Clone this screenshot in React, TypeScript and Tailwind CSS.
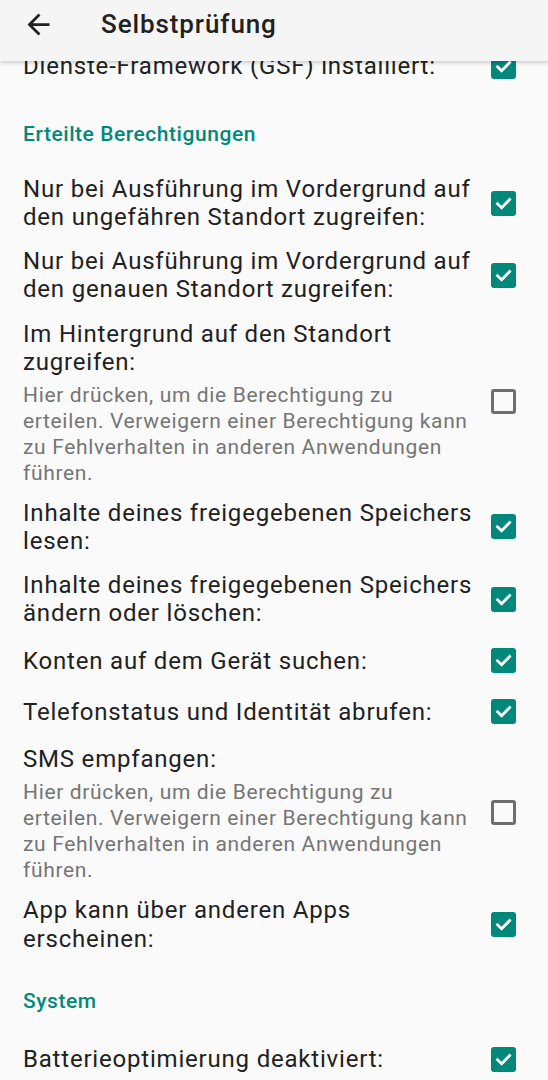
import React from "react";

type Item = { title: React.ReactNode; sub?: string; checked: boolean; first?: boolean };

const SUB =
  "Hier drücken, um die Berechtigung zu erteilen. Verweigern einer Berechtigung kann zu Fehlverhalten in anderen Anwendungen führen.";

function Check({ checked }: { checked: boolean }) {
  if (checked) {
    return (
      <div className="w-[25px] h-[25px] shrink-0 rounded-[3px] bg-[#00897b] flex items-center justify-center">
        <svg width="25" height="25" viewBox="0 0 25 25">
          <path d="M6.5 12.8 L10.6 16.8 L18.6 8.6" fill="none" stroke="#ffffff" strokeWidth="2.8" strokeLinecap="square" />
        </svg>
      </div>
    );
  }
  return <div className="w-[25px] h-[25px] shrink-0 rounded-[3px] border-[3px] border-[#6e6e6e]" />;
}

function Row({ item }: { item: Item }) {
  return (
    <div
      className={
        "flex items-center pl-[23px] pr-[32px] py-[8px] min-h-[51px] " + (item.first ? "mt-[-20px]" : "")
      }
    >
      <div className="flex-1 min-w-0 pr-[15px]">
        <div className="text-[24px] leading-[28.125px] tracking-[0.8px] text-[#212121]">{item.title}</div>
        {item.sub && (
          <div className="text-[21px] leading-[26px] tracking-[0.65px] text-[#757575] mt-[6px] mb-[-3px]">
            {item.sub}
          </div>
        )}
      </div>
      <Check checked={item.checked} />
    </div>
  );
}

function Section({ title, first }: { title: string; first?: boolean }) {
  return (
    <div
      className={
        "pl-[23px] pb-[20px] text-[21px] leading-[25px] tracking-[0.55px] font-medium text-[#00897b] " +
        (first ? "pt-[30px]" : "pt-[28px]")
      }
    >
      {title}
    </div>
  );
}

const perms: Item[] = [
  { title: "Nur bei Ausführung im Vordergrund auf den ungefähren Standort zugreifen:", checked: true },
  { title: "Nur bei Ausführung im Vordergrund auf den genauen Standort zugreifen:", checked: true },
  { title: "Im Hintergrund auf den Standort zugreifen:", sub: SUB, checked: false },
  { title: "Inhalte deines freigegebenen Speichers lesen:", checked: true },
  { title: "Inhalte deines freigegebenen Speichers ändern oder löschen:", checked: true },
  { title: "Konten auf dem Gerät suchen:", checked: true },
  { title: "Telefonstatus und Identität abrufen:", checked: true },
  { title: "SMS empfangen:", sub: SUB, checked: false },
  { title: "App kann über anderen Apps erscheinen:", checked: true },
];

export default function App() {
  return (
    <div
      className="w-[548px] h-[1080px] overflow-hidden bg-[#fafafa]"
      style={{ fontFamily: "Roboto, 'Noto Sans', sans-serif" }}
    >
      <header className="relative z-10 h-[61px] bg-[#f5f5f5] flex items-center pb-[13px] shadow-[0_2px_4px_rgba(0,0,0,0.18)]">
        <svg className="ml-[22px] w-[33px] h-[33px]" viewBox="0 0 24 24">
          <path d="M20 11H7.83l5.59-5.59L12 4l-8 8 8 8 1.41-1.41L7.83 13H20v-2z" fill="#212121" />
        </svg>
        <h1 className="ml-[46px] text-[26px] tracking-[0.9px] font-medium text-[#212121]">Selbstprüfung</h1>
      </header>
      <main>
        <Row item={{ title: "Dienste-Framework (GSF) installiert:", checked: true, first: true }} />
        <Section title="Erteilte Berechtigungen" first />
        {perms.map((p, i) => (
          <Row key={i} item={p} />
        ))}
        <Section title="System" />
        <Row item={{ title: "Batterieoptimierung deaktiviert:", checked: true }} />
      </main>
    </div>
  );
}
